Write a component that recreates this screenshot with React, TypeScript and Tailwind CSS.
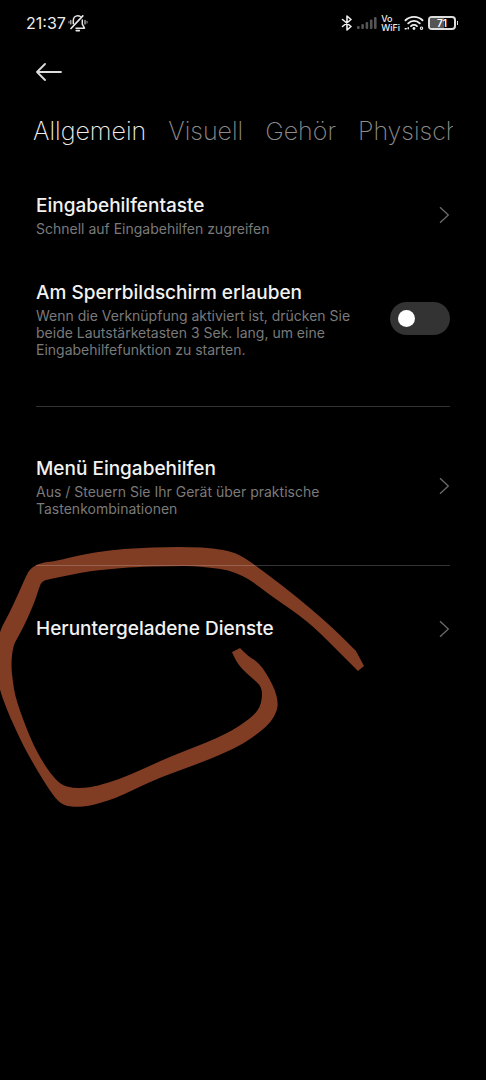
import type { ReactNode } from "react";

const tabs = ["Allgemein", "Visuell", "Gehör", "Physisch"];

function MutedBell() {
  return (
    <svg className="h-5 w-5" viewBox="0 0 20 20" fill="none" stroke="#e6e6e6" strokeWidth="1.5" strokeLinecap="round" strokeLinejoin="round" aria-label="Lautlos">
      <path d="M3 15.500 14.800 2.800" strokeWidth="1.700" />
      <path d="M5.300 10.800V7.500c0-2.800 2-4.700 4.500-4.700.9 0 1.800.2 2.500.7" />
      <path d="M14.300 7v4.200l2.200 4H8" />
      <path d="M8.300 17.600h3" strokeWidth="1.700" />
      <path d="M2.800 7.500v3.400M17 7.500v3.400" strokeWidth="1.300" stroke="#bbb" />
      <path d="M1 8.400v1.600M19 8.400v1.600" stroke="#888" strokeWidth="1.200" />
    </svg>
  );
}

function Bluetooth() {
  return (
    <svg className="h-4 w-3" viewBox="0 0 12 16" fill="none" stroke="#eee" strokeWidth="1.600" strokeLinejoin="round" strokeLinecap="round" aria-label="Bluetooth">
      <path d="M1.500 4.500 10 11.500 6 15V1l4 3.500-8.500 7" />
    </svg>
  );
}

function Signal() {
  return (
    <svg className="h-4 w-5" viewBox="0 0 20 16" fill="#555" aria-label="Mobilfunk">
      <rect x="0" y="11" width="2.600" height="3" rx="1" />
      <rect x="4.300" y="9" width="2.600" height="5" rx="1" />
      <rect x="8.600" y="7" width="2.600" height="7" rx="1" />
      <rect x="12.900" y="4.500" width="2.600" height="9.500" rx="1" />
      <rect x="17" y="2" width="2.600" height="12" rx="1" />
    </svg>
  );
}

function Wifi() {
  return (
    <svg className="h-4 w-5" viewBox="0 0 20 16" fill="none" stroke="#eee" strokeWidth="1.900" strokeLinecap="round" aria-label="WLAN">
      <path d="M1.500 5.300c4.700-4.600 12.300-4.600 17 0" />
      <path d="M4.200 8.300c3.200-3.200 8.400-3.200 11.600 0" />
      <path d="M7 11.100c1.700-1.600 4.300-1.600 6 0" />
      <circle cx="10" cy="13.500" r="1.400" fill="#eee" stroke="none" />
      <path d="M1.200 13.800h1M4.200 12.800v1" strokeWidth="1.500" />
      <circle cx="17.500" cy="13.200" r="1.200" strokeWidth="1.100" />
    </svg>
  );
}

function Battery() {
  return (
    <div className="flex items-center gap-px">
      <div className="relative flex h-3.5 w-7 items-center justify-center overflow-hidden rounded border-2 border-[#ddd]">
        <div className="absolute inset-y-0 left-0 w-3/5 bg-[#555]" />
        <span className="relative text-[10px] leading-none font-semibold text-white">71</span>
      </div>
      <div className="h-1 w-px bg-[#ddd]" />
    </div>
  );
}

function Chevron() {
  return (
    <svg className="h-[18px] w-3 shrink-0" viewBox="0 0 12 18" fill="none" stroke="#6b6b6b" strokeWidth="1.300" aria-hidden="true">
      <path d="M2 1.200 10.300 9 2 16.800" />
    </svg>
  );
}

function RowText({ title, children }: { title: string; children?: ReactNode }) {
  return (
    <span className="block">
      <span className="block text-[19px] leading-7 font-medium text-[#f2f2f2]">{title}</span>
      {children && <span className="block text-sm leading-[17px] text-[#7a7a7a]">{children}</span>}
    </span>
  );
}

function LinkRow({ title, children }: { title: string; children?: ReactNode }) {
  return (
    <a href="#" className="flex items-center justify-between gap-8 py-[21px]">
      <RowText title={title}>{children}</RowText>
      <Chevron />
    </a>
  );
}

// outline of the pen stroke, doubled points stay sharp
const outline = [
  [364, 666], [364, 666], [356, 651], [356, 651], [334, 629], [310, 608], [283, 586], [256, 566], [245, 558], [233, 552],
  [213, 548], [190, 547], [167, 547], [138, 548], [110, 550], [80, 555], [56, 561], [40, 563], [31, 568], [27, 574],
  [20, 590], [9, 614], [-1, 632], [-6, 660], [-1, 688], [7, 710], [15, 728], [24, 747], [33, 763], [43, 780],
  [53, 795], [59, 802], [66, 806], [77, 807], [89, 806], [100, 803], [116, 798], [133, 790], [150, 782], [167, 775],
  [200, 763], [222, 754], [243, 744], [260, 732], [271, 722], [277, 711], [278, 702], [275, 690], [269, 678], [262, 667],
  [256, 661], [248, 656], [240, 648], [240, 648], [232, 652], [232, 652], [236, 661], [242, 669], [252, 678], [260, 685],
  [262, 691], [262, 698], [260, 707], [254, 715], [245, 722], [233, 730], [217, 738], [200, 745], [167, 758], [143, 769],
  [120, 779], [97, 786], [85, 788], [73, 788], [61, 785], [50, 773], [41, 759], [33, 744], [26, 727], [20, 711],
  [15, 695], [13, 683], [11, 665], [13, 646], [18, 637], [25, 624], [35, 601], [39, 588], [42, 581], [50, 579],
  [70, 575], [90, 571], [112, 569], [133, 567], [173, 566], [193, 566], [213, 568], [228, 570], [243, 576], [253, 582],
  [266, 592], [280, 602], [299, 615], [317, 630], [340, 653], [358, 671], [358, 671],
];

function smooth(points: number[][]) {
  const mid = (a: number[], b: number[]) => `${(a[0] + b[0]) / 2} ${(a[1] + b[1]) / 2}`;
  const curves = points.slice(1).map((p, i) => `Q${p[0]} ${p[1]} ${mid(p, points[i + 2] ?? points[0])}`);
  return `M${mid(points[0], points[1])}${curves.join("")}Z`;
}

function Scribble() {
  return (
    <svg className="pointer-events-none absolute -top-5 -left-9 h-[270px] w-[370px]" viewBox="0 545 370 270" fill="#803d23" aria-hidden="true">
      <path d={smooth(outline)} />
    </svg>
  );
}

export default function App() {
  return (
    <div className="min-h-screen overflow-hidden bg-black font-['Inter','Noto_Sans',sans-serif] text-white">
      <header>
        <div className="flex h-[46px] items-center justify-between pr-7 pl-[26px]">
          <div className="flex items-center gap-0.5">
            <span className="text-base text-[#eee]">21:37</span>
            <MutedBell />
          </div>
          <div className="flex items-center gap-1">
            <Bluetooth />
            <Signal />
            <span className="text-[9px] leading-[9px] font-medium text-[#eee]">
              Vo
              <br />
              WiFi
            </span>
            <Wifi />
            <Battery />
          </div>
        </div>
        <div className="flex h-[52px] items-center px-9">
          <button type="button" aria-label="Zurück">
            <svg className="h-5 w-[26px]" viewBox="0 0 26 20" fill="none" stroke="#ddd" strokeWidth="1.800" strokeLinecap="round" strokeLinejoin="round">
              <path d="M9 2 1 10l8 8M1 10h24" />
            </svg>
          </button>
        </div>
      </header>

      <nav className="mx-[33px] flex h-[67px] items-center gap-[22px] overflow-hidden text-[25px] font-extralight whitespace-nowrap">
        {tabs.map((tab, i) => (
          <a key={tab} href="#" className={i === 0 ? "text-[#eee]" : "text-[#8c8c8c]"}>
            {tab}
          </a>
        ))}
      </nav>

      <main className="px-9 pt-1.5">
        <LinkRow title="Eingabehilfentaste">Schnell auf Eingabehilfen zugreifen</LinkRow>
        <label className="flex items-center justify-between gap-8 py-[21px]">
          <RowText title="Am Sperrbildschirm erlauben">
            Wenn die Verknüpfung aktiviert ist, drücken Sie beide Lautstärketasten 3 Sek. lang, um eine Eingabehilfefunktion zu starten.
          </RowText>
          <input
            type="checkbox"
            role="switch"
            className="h-[33px] w-[60px] shrink-0 appearance-none rounded-full bg-[#333] p-2 before:block before:size-[17px] before:rounded-full before:bg-white checked:bg-blue-500 checked:before:ml-auto"
          />
        </label>
        <hr className="my-[27px] border-white/20" />
        <LinkRow title="Menü Eingabehilfen">Aus / Steuern Sie Ihr Gerät über praktische Tastenkombinationen</LinkRow>
        <div className="relative mt-[27px]">
          <Scribble />
          <hr className="relative mb-7 border-white/20" />
          <div className="relative">
            <LinkRow title="Heruntergeladene Dienste" />
          </div>
        </div>
      </main>
    </div>
  );
}
